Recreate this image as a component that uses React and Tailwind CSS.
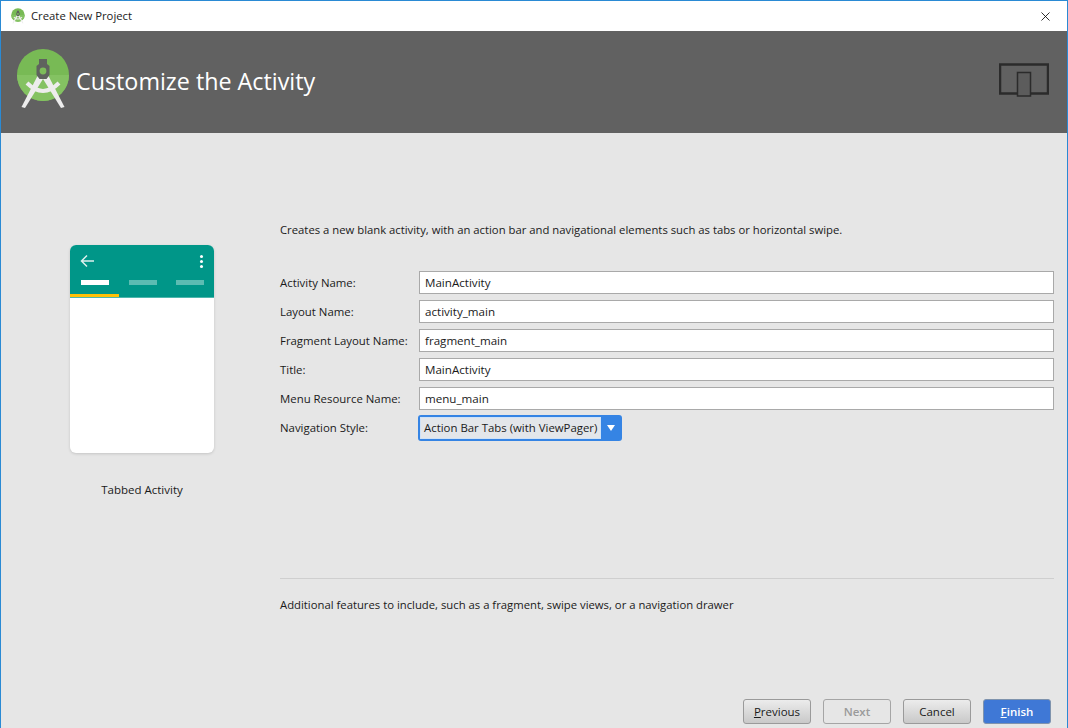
import { X } from "lucide-react";

const FIELDS = [
  { label: "Activity Name:", value: "MainActivity" },
  { label: "Layout Name:", value: "activity_main" },
  { label: "Fragment Layout Name:", value: "fragment_main" },
  { label: "Title:", value: "MainActivity" },
  { label: "Menu Resource Name:", value: "menu_main" },
];

const StudioLogo = ({ size = 62 }) => (
  <svg width={size} height={size} viewBox="0 0 62 62" className="block">
    <circle cx="27" cy="27" r="26" fill="#78BA55" />
    <path d="M1 27 H53 A26 26 0 0 1 1 27 Z" fill="#84C262" />
    <path d="M11 35 Q27 51 43 35" stroke="#EDEDED" strokeWidth="4" fill="none" />
    <path d="M21.5 28 L27 31 L9 60 L5.5 59 Z" fill="#EDEDED" />
    <path d="M32.5 28 L27 31 L45 60 L48.5 59 Z" fill="#EDEDED" />
    <path d="M23 11 H31 V16 L33.5 18 V27 L30.5 31 H23.5 L20.5 27 V18 L23 16 Z" fill="#5F625E" />
    <circle cx="27" cy="23" r="3.4" fill="#7DBB5A" />
  </svg>
);

const DeviceIcon = () => (
  <svg width="50" height="34" viewBox="0 0 50 34" fill="none">
    <rect x="1" y="1.5" width="48" height="29" stroke="#2b2b2b" strokeWidth="2.5" />
    <rect x="18.5" y="9.5" width="13" height="23.5" fill="#5c5c5c" stroke="#2b2b2b" strokeWidth="1.5" />
  </svg>
);

const Button = ({ children, className }) => (
  <button className={`w-[68px] h-[25px] rounded-[3px] border text-[11.5px] leading-none ${className}`}>
    {children}
  </button>
);

const ActivityPreview = () => (
  <div className="w-[144px] h-[208px] rounded-[6px] bg-white shadow-[0_1px_3px_rgba(0,0,0,0.15)] overflow-hidden">
    <div className="h-[53px] bg-[#009688] border-b border-[#4db6ac] flex flex-col">
      <div className="flex items-center justify-between pl-[10px] pr-[11px] h-[32px]">
        <svg width="14" height="14" viewBox="0 0 14 14" fill="none" stroke="#DDF0EE" strokeWidth="1.5">
          <path d="M14 7 H2 M7 1.5 L1.5 7 L7 12.5" />
        </svg>
        <div className="flex flex-col gap-[2px]">
          <div className="w-[3px] h-[3px] rounded-full bg-white" />
          <div className="w-[3px] h-[3px] rounded-full bg-white" />
          <div className="w-[3px] h-[3px] rounded-full bg-white" />
        </div>
      </div>
      <div className="flex justify-between pl-[11px] pr-[10px] pt-[3px]">
        <div className="w-[28px] h-[5px] bg-white" />
        <div className="w-[28px] h-[5px] bg-[#5cbcb2]" />
        <div className="w-[28px] h-[5px] bg-[#5cbcb2]" />
      </div>
      <div className="w-[49px] h-[3px] bg-[#ffc107] mt-auto" />
    </div>
  </div>
);

export default function App() {
  return (
    <div
      className="w-[1068px] h-[728px] overflow-hidden flex flex-col bg-[#e6e6e6] border-x border-t border-[#2a8ad4] text-[#1a1a1a] text-[12px]"
      style={{ fontFamily: '"Open Sans", "Noto Sans", sans-serif' }}
    >
      {/* title bar */}
      <div className="h-[30px] shrink-0 bg-white flex items-center pl-[10px] pr-[14px]">
        <StudioLogo size={16} />
        <span className="ml-[4px] text-[11.3px] text-[#222]">Create New Project</span>
        <X size={15} strokeWidth={1.3} className="ml-auto text-black" />
      </div>

      {/* header */}
      <div className="h-[102px] shrink-0 bg-[#616161] flex items-center pl-[15px] pr-[18px]">
        <div className="mb-[6px]">
          <StudioLogo size={62} />
        </div>
        <h1 className="ml-[-2px] mb-[2px] text-[23.3px] text-white font-normal">Customize the Activity</h1>
        <div className="ml-auto mt-[-4px]">
          <DeviceIcon />
        </div>
      </div>

      <div className="flex-1 flex min-h-0">
        {/* preview column */}
        <div className="w-[279px] shrink-0 pl-[69px] pt-[112px]">
          <ActivityPreview />
          <p className="w-[144px] mt-[28px] text-center text-[11.5px]">Tabbed Activity</p>
        </div>

        {/* form column */}
        <div className="flex-1 flex flex-col pr-[13px] pt-[88px] pb-[4px]">
          <p className="text-[11.3px] leading-[17px]">
            Creates a new blank activity, with an action bar and navigational elements such as tabs or horizontal swipe.
          </p>

          <div className="mt-[33px] flex flex-col gap-[6px]">
            {FIELDS.map((f) => (
              <div key={f.label} className="flex items-center h-[23px]">
                <span className="w-[139px] shrink-0 text-[11.4px]">{f.label}</span>
                <div className="flex-1 h-[23px] bg-white border border-[#a9a9a9] pl-[5px] flex items-center text-[11.6px]">
                  {f.value}
                </div>
              </div>
            ))}
            <div className="flex items-center h-[24px]">
              <span className="w-[138px] shrink-0 text-[11.4px]">Navigation Style:</span>
              <div className="w-[204px] h-[26px] rounded-[3px] border-2 border-[#3584e4] bg-[#3584e4] flex items-center">
                <span className="flex-1 h-full flex items-center pl-[3px] bg-[#e3e6ea] border border-[#cfe2f7] text-[11.4px] whitespace-nowrap">
                  Action Bar Tabs (with ViewPager)
                </span>
                <div className="w-[19px] h-full flex items-center justify-center">
                  <div className="w-0 h-0 border-x-[4px] border-x-transparent border-t-[6px] border-t-white" />
                </div>
              </div>
            </div>
          </div>

          <div className="mt-[138px] border-t border-[#cfcfcf] pt-[17px]">
            <p className="text-[11.3px] leading-[17px]">
              Additional features to include, such as a fragment, swipe views, or a navigation drawer
            </p>
          </div>

          <div className="mt-auto flex justify-end gap-[12px] pr-[3px]">
            <Button className="border-[#9a9a9a] bg-gradient-to-b from-[#ececec] to-[#c9c9c9] text-[#1a1a1a]">
              <u>P</u>revious
            </Button>
            <Button className="border-[#a5a5a5] bg-[#e6e6e6] text-[#9a9a9a] font-semibold">Next</Button>
            <Button className="border-[#9a9a9a] bg-gradient-to-b from-[#ececec] to-[#c9c9c9] text-[#1a1a1a]">
              Cancel
            </Button>
            <Button className="border-[#7f93ad] bg-[#3f78d6] text-white font-semibold">
              <u>F</u>inish
            </Button>
          </div>
        </div>
      </div>
    </div>
  );
}
